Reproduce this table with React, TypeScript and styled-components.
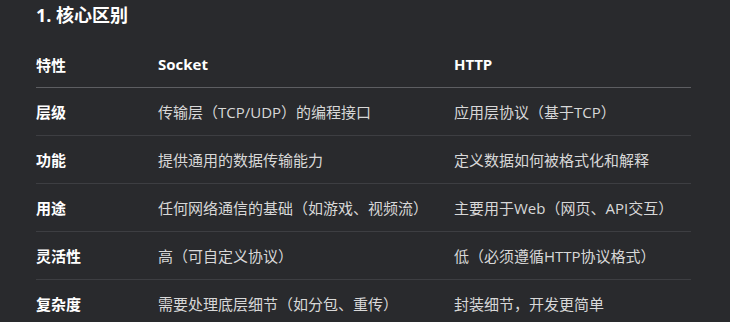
import React from "react";
import styled, { createGlobalStyle } from "styled-components";

const rows: [string, string, string][] = [
  ["层级", "传输层（TCP/UDP）的编程接口", "应用层协议（基于TCP）"],
  ["功能", "提供通用的数据传输能力", "定义数据如何被格式化和解释"],
  ["用途", "任何网络通信的基础（如游戏、视频流）", "主要用于Web（网页、API交互）"],
  ["灵活性", "高（可自定义协议）", "低（必须遵循HTTP协议格式）"],
  ["复杂度", "需要处理底层细节（如分包、重传）", "封装细节，开发更简单"],
];

const App = () => (
  <>
    <GlobalStyle />
    <Page>
      <Title>1. 核心区别</Title>
      <Table>
        <colgroup>
          <col style={{ width: 122 }} />
          <col style={{ width: 296 }} />
          <col />
        </colgroup>
        <thead>
          <tr>
            <Th>特性</Th>
            <Th>Socket</Th>
            <Th>HTTP</Th>
          </tr>
        </thead>
        <tbody>
          {rows.map(([feature, socket, http], index) => (
            <Row key={index} last={index === rows.length - 1}>
              <Feature>{feature}</Feature>
              <Td>{socket}</Td>
              <Td>{http}</Td>
            </Row>
          ))}
        </tbody>
      </Table>
    </Page>
  </>
);

export default App;

const GlobalStyle = createGlobalStyle`
  html, body {
    margin: 0;
    padding: 0;
    background: #292a2d;
  }
`;

const Page = styled.div`
  width: 730px;
  height: 322px;
  overflow: hidden;
  padding: 0 39px 0 36px;
  box-sizing: border-box;
  background: #292a2d;
  color: #dcdcdc;
  font-family: "Open Sans", "Noto Sans CJK SC", sans-serif;
`;

const Title = styled.h3`
  margin: 0;
  padding-top: 3px;
  height: 38px;
  font-size: 18px;
  line-height: 24px;
  font-weight: 700;
  color: #ffffff;
`;

const Table = styled.table`
  width: 655px;
  border-collapse: collapse;
  table-layout: fixed;
`;

const Th = styled.th`
  text-align: left;
  padding: 0;
  height: 46px;
  font-size: 15px;
  font-weight: 700;
  color: #ffffff;
  border-bottom: 1px solid #5d5e62;
  vertical-align: middle;
`;

const Row = styled.tr<{ last?: boolean }>`
  border-bottom: ${(p) => (p.last ? "none" : "1px solid #3d3e42")};
`;

const Td = styled.td`
  padding: 0;
  height: 47px;
  font-size: 15px;
  color: #d8d8d8;
  vertical-align: middle;
  white-space: nowrap;
`;

const Feature = styled(Td)`
  font-weight: 700;
  color: #ffffff;
`;
